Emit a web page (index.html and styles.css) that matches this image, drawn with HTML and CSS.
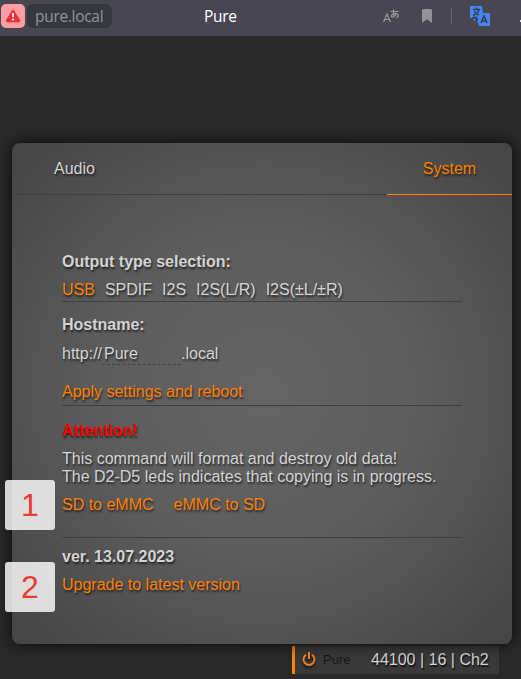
FILE: index.html
```html
<!DOCTYPE html>
<html lang="en">
<head>
<meta charset="utf-8">
<title>Pure</title>
<link rel="stylesheet" href="styles.css">
</head>
<body>
<header class="browser-bar">
  <span class="warning">
    <svg width="16" height="14" viewBox="0 0 16 14"><path d="M8 2 14 12H2Z" fill="#e6303a" stroke="#e6303a" stroke-width="2.500" stroke-linejoin="round"/><path d="M7 4h2v4H7zM7 9.500h2v2H7z" fill="#ffe3e3"/></svg>
  </span>
  <span class="address">pure.local</span>
  <span class="page-title">Pure</span>
  <span class="tools">
    <svg class="reader" width="17" height="14" viewBox="0 0 17 14" fill="none" stroke="#97979f" stroke-width="1.2"><path d="M.6 13 4 5l3.4 8M2 10.500h4M7.500 2.500h8M10.500.5c-.3 3 0 5 .8 7M13.500 4c-1 3-3.300 4.500-4.700 4-1.300-.8.200-3.200 3-3.500 4-.5 4.600 3.500 1.200 4.300"/></svg>
    <svg class="bookmark" width="10" height="14" viewBox="0 0 10 14"><path d="M0 1.500Q0 0 1.500 0h7Q10 0 10 1.500V14L5 10.300 0 14Z" fill="#929298"/></svg>
    <i class="separator"></i>
    <svg class="translate" width="20" height="20" viewBox="0 0 20 20"><path d="M1 0H11q1 0 1 1l1 6h6q1 0 1 1v11q0 1-1 1H10q-1 0-1.300-1L8 16 4.500 15.500 2 12H1q-1 0-1-1V1Q0 0 1 0Z" fill="#4285f4"/><path d="M3 3.500h7M6.500 1.500v2M9 4C8 7 5 9 3 9.500M4 5c1 2 3 3.500 5 4" fill="none" stroke="#343d52" stroke-width="1.400"/><path d="M2.500 13c1-2 4-2 4.500 0M5 15.500 8 13" fill="none" stroke="#343d52" stroke-width="1.800"/><path d="m11 17 3-7 3 7M12 15h4" fill="none" stroke="#343d52" stroke-width="1.500"/></svg>
    <i class="more"></i>
  </span>
</header>
<main class="panel">
  <nav class="tabs">
    <a class="tab">Audio</a>
    <a class="tab active">System</a>
  </nav>
  <div class="content">
    <section class="group output">
      <h3>Output type selection:</h3>
      <p class="options"><a class="link">USB</a><a>SPDIF</a><a>I2S</a><a>I2S(L/R)</a><a>I2S(±L/±R)</a></p>
    </section>
    <section class="group host">
      <h3>Hostname:</h3>
      <p class="hostname"><span class="scheme">http://</span><span class="field">Pure</span>.local</p>
      <a class="link">Apply settings and reboot</a>
    </section>
    <section class="group copy">
      <h3 class="attention">Attention!</h3>
      <p>This command will format and destroy old data!<br>The D2-D5 leds indicates that copying is in progress.</p>
      <p class="actions"><a class="link">SD to eMMC</a><a class="link">eMMC to SD</a></p>
    </section>
    <section class="version">
      <h3>ver. 13.07.2023</h3>
      <a class="link">Upgrade to latest version</a>
    </section>
  </div>
  <span class="marker first">1</span>
  <span class="marker second">2</span>
</main>
<footer class="status">
  <svg class="power" width="14" height="15" viewBox="0 0 14 15" fill="none" stroke="#f47a20" stroke-width="2"><path d="M4 2.800a5.500 5.500 0 1 0 6 0M7 0v7"/></svg>
  <span class="device">Pure</span>
  <span class="format">44100 | 16 | Ch2</span>
</footer>
</body>
</html>
```
FILE: styles.css
```css
* { box-sizing: border-box; }
body {
  margin: 0;
  height: 679px;
  overflow: hidden;
  background: #292929;
  color: #d3d3d3;
  font: 16px/18px "Liberation Sans", Arial, sans-serif;
}
h3, p { margin: 0; font-size: 16px; }
svg { display: block; flex: none; }

.browser-bar {
  display: flex;
  align-items: center;
  height: 36px;
  padding: 0 0 4px 1px;
  background: #484751;
  font-family: "Open Sans", "Noto Sans", sans-serif;
}
.warning {
  display: flex;
  align-items: center;
  justify-content: center;
  width: 24px;
  height: 24px;
  border-radius: 5px;
  background: #ff9fa5;
}
.address {
  width: 85px;
  height: 24px;
  margin-left: 2px;
  padding-left: 8px;
  border-radius: 6px;
  background: #363840;
  color: #92939a;
  font-size: 15.5px;
  letter-spacing: -.3px;
  line-height: 24px;
}
.page-title { width: 50px; margin-left: 92px; color: #fff; font-size: 15.5px; letter-spacing: -.3px; line-height: 24px; }
.tools { display: flex; flex: 1; align-items: center; margin-left: 129px; }
.reader { margin-top: -1px; }
.bookmark { margin-left: 22px; }
.separator { width: 1px; height: 16px; margin-left: 19px; background: #65656f; }
.translate { margin-left: 18px; }
.more { width: 1px; height: 2px; margin: 10px 0 0 auto; background: #ddd; }

.panel {
  position: relative;
  width: 500px;
  height: 501px;
  margin: 107px 0 0 12px;
  border-radius: 8px;
  background: radial-gradient(circle at center, #646464 0%, #5d5d5d 45%, #444 100%);
  box-shadow: 0 0 15px rgba(0, 0, 0, .8);
  text-shadow: 1px 2px 2px rgba(0, 0, 0, .6);
}
.tabs {
  display: flex;
  justify-content: space-between;
  height: 52px;
  border-bottom: 1px solid #404040;
}
.tab { width: 125px; height: 52px; line-height: 51px; text-align: center; }
.tab.active { border-bottom: 1px solid #ff7f00; color: #ff7f00; }
.content { padding: 58px 50px 0; }
.link { color: #ff7f00; }
.group { border-bottom: 1px solid #404040; }
.output { height: 49px; }
.options { display: flex; gap: 10px; margin-top: 10px; }
.options .link, .host > .link { display: block; }
.host { height: 104px; padding-top: 14px; }
.hostname { display: flex; height: 20px; margin: 11px 0 18px; }
.scheme { width: 40px; }
.field { width: 79px; height: 20px; padding-left: 2px; border-bottom: 1px dashed #424242; }
.copy { height: 132px; padding-top: 16px; }
.attention { margin-bottom: 10px; color: #f00; }
.actions { display: flex; gap: 20px; margin-top: 10px; }
.version { padding-top: 10px; }
.version h3 { margin-bottom: 10px; }
.marker {
  position: absolute;
  left: -7px;
  width: 50px;
  height: 50px;
  border-radius: 3px;
  background: rgba(246, 246, 246, .86);
  color: #e93c2f;
  font-size: 32px;
  line-height: 50px;
  text-align: center;
  text-shadow: none;
}
.first { top: 337px; }
.second { top: 419px; }

.status {
  display: flex;
  align-items: center;
  width: 207px;
  height: 28px;
  margin: 2px 0 0 292px;
  padding-left: 8px;
  border-left: 3px solid #ff7f00;
  background: #393939;
  text-shadow: 1px 2px 1px #111;
}
.power { margin: -1px 0 0 -1px; filter: drop-shadow(0 2px 1px #111); }
.device { width: 48px; margin-left: 7px; color: #181818; font-size: 13px; text-shadow: none; }
```
